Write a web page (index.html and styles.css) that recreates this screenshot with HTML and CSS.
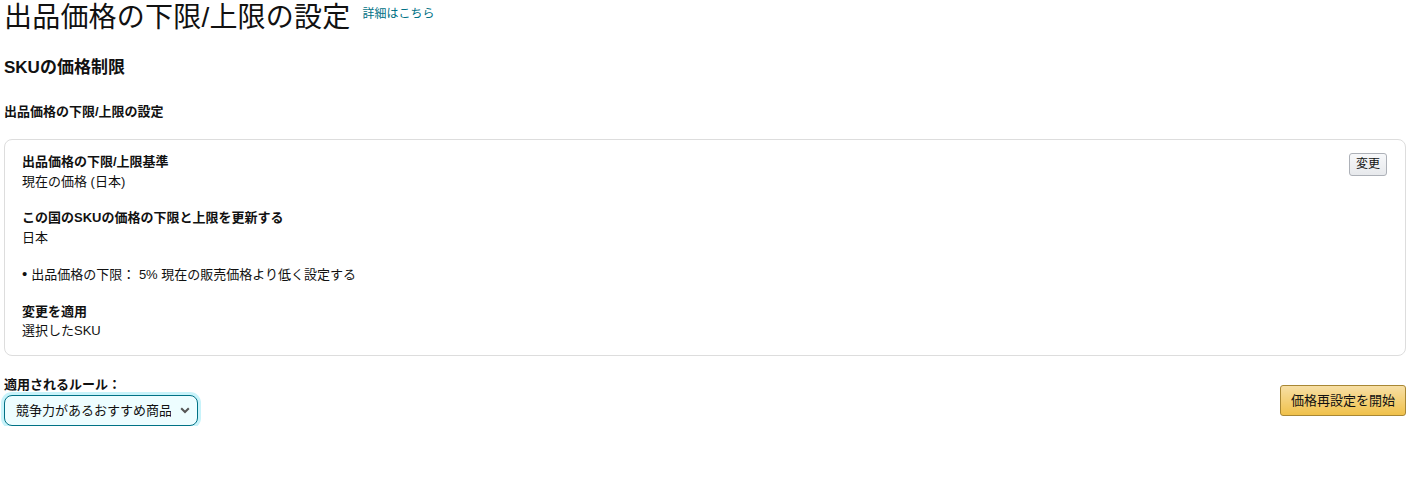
FILE: index.html
```html
<!DOCTYPE html>
<html lang="ja">
<head>
    <meta charset="UTF-8">
    <title>出品価格の下限/上限の設定</title>
    <link rel="stylesheet" href="styles.css">
</head>
<body>
    <div class="page">
        <div class="title-row">
            <h1>出品価格の下限/上限の設定</h1>
            <a class="help-link" href="#">詳細はこちら</a>
        </div>

        <h2>SKUの価格制限</h2>
        <h3>出品価格の下限/上限の設定</h3>

        <div class="card">
            <div class="card-body">
                <div class="block">
                    <div class="label">出品価格の下限/上限基準</div>
                    <div class="value">現在の価格 (日本)</div>
                </div>
                <div class="block">
                    <div class="label">この国のSKUの価格の下限と上限を更新する</div>
                    <div class="value">日本</div>
                </div>
                <ul class="rules">
                    <li>出品価格の下限： 5% 現在の販売価格より低く設定する</li>
                </ul>
                <div class="block">
                    <div class="label">変更を適用</div>
                    <div class="value">選択したSKU</div>
                </div>
            </div>
            <button class="btn-small" type="button">変更</button>
        </div>

        <div class="footer">
            <div class="rule-select">
                <label class="label" for="rule">適用されるルール：</label>
                <div class="select-wrap">
                    <select id="rule">
                        <option>競争力があるおすすめ商品</option>
                    </select>
                    <svg class="chevron" width="10" height="7" viewBox="0 0 10 7">
                        <path d="M1.2 1.2 L5 5 L8.8 1.2" fill="none" stroke="#555" stroke-width="2"/>
                    </svg>
                </div>
            </div>
            <button class="btn-primary" type="button">価格再設定を開始</button>
        </div>
    </div>
</body>
</html>
```

FILE: styles.css
```css
* {
    margin: 0;
    padding: 0;
    box-sizing: border-box;
}

body {
    font-family: "Liberation Sans", "Noto Sans CJK JP", sans-serif;
    color: #111;
    background-color: white;
}

.page {
    padding: 0 19px 0 4px;
}

.title-row {
    display: flex;
    align-items: flex-start;
    gap: 12px;
    height: 40px;
}

h1 {
    font-size: 28px;
    font-weight: 400;
    line-height: 36px;
    letter-spacing: 0.2px;
}

.help-link {
    font-size: 12px;
    line-height: 16px;
    color: #007185;
    text-decoration: none;
    margin-top: 6px;
}

h2 {
    font-size: 17px;
    font-weight: 700;
    line-height: 24px;
    margin-top: 16px;
}

h3 {
    font-size: 13px;
    font-weight: 700;
    line-height: 16px;
    margin-top: 24px;
}

.card {
    display: flex;
    justify-content: space-between;
    align-items: flex-start;
    margin-top: 19px;
    border: 1px solid #dddddd;
    border-radius: 8px;
    padding: 12px 18px 14px 17px;
}

.card-body {
    display: flex;
    flex-direction: column;
    gap: 17px;
}

.label {
    font-size: 13px;
    font-weight: 700;
    line-height: 19.5px;
}

.value {
    font-size: 13px;
    line-height: 19.5px;
}

.rules {
    list-style: none;
    font-size: 13px;
    line-height: 19.5px;
}

.rules li::before {
    content: "•";
    font-size: 15px;
    margin-right: 4px;
}

.btn-small {
    font-family: inherit;
    font-size: 12px;
    line-height: 19px;
    padding: 1px 6px;
    margin-top: 1px;
    color: #111;
    border: 1px solid #adb1b8;
    border-radius: 3px;
    background: linear-gradient(#f7f8fa, #e7e9ec);
}

.footer {
    display: flex;
    justify-content: space-between;
    align-items: flex-start;
    margin-top: 19px;
}

.rule-select {
    display: flex;
    flex-direction: column;
    gap: 1px;
}

.select-wrap {
    position: relative;
    width: 194px;
}

select {
    appearance: none;
    width: 100%;
    height: 31px;
    font-family: inherit;
    font-size: 13px;
    color: #111;
    padding: 0 26px 0 11px;
    border: 1px solid #007185;
    border-radius: 8px;
    background-color: #edfdff;
    box-shadow: 0 0 0 3px #c8f3fa;
}

.chevron {
    position: absolute;
    right: 8px;
    top: 12px;
    pointer-events: none;
}

.btn-primary {
    font-family: inherit;
    font-size: 13px;
    line-height: 29px;
    padding: 0 10px;
    margin-top: 10px;
    color: #111;
    border: 1px solid #a88734;
    border-radius: 3px;
    background: linear-gradient(#f7dfa5, #f0c14b);
}
```
